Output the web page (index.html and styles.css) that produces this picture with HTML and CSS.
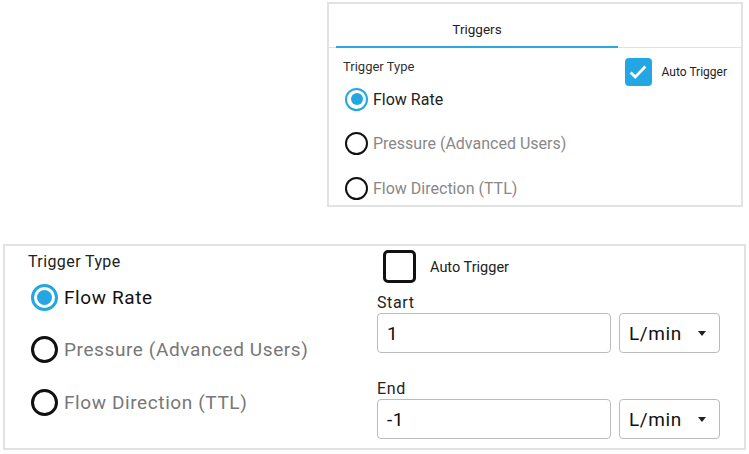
FILE: index.html
```html
<!DOCTYPE html>
<html>
<head>
    <meta charset="utf-8">
    <title>Triggers</title>
    <link rel="stylesheet" href="styles.css">
</head>
<body>
    <div class="top-row">
        <div class="panel small">
            <div class="tabs">
                <div class="tab active">Triggers</div>
            </div>
            <div class="small-body">
                <div class="options">
                    <div class="group-label">Trigger Type</div>
                    <label class="option checked"><span class="radio"></span>Flow Rate</label>
                    <label class="option"><span class="radio"></span>Pressure (Advanced Users)</label>
                    <label class="option"><span class="radio"></span>Flow Direction (TTL)</label>
                </div>
                <div class="auto">
                    <span class="check on">
                        <svg viewBox="0 0 24 24" width="22" height="22"><path d="M4 12.5l5 5L20 6" fill="none" stroke="#fff" stroke-width="3"/></svg>
                    </span>
                    <span class="auto-label">Auto Trigger</span>
                </div>
            </div>
        </div>
    </div>

    <div class="panel large">
        <div class="options">
            <div class="group-label">Trigger Type</div>
            <label class="option checked"><span class="radio"></span>Flow Rate</label>
            <label class="option"><span class="radio"></span>Pressure (Advanced Users)</label>
            <label class="option"><span class="radio"></span>Flow Direction (TTL)</label>
        </div>
        <div class="settings">
            <div class="auto">
                <span class="check"></span>
                <span class="auto-label">Auto Trigger</span>
            </div>
            <div class="field-label">Start</div>
            <div class="field">
                <div class="input">1</div>
                <div class="select">L/min<span class="caret"></span></div>
            </div>
            <div class="field-label end">End</div>
            <div class="field">
                <div class="input">-1</div>
                <div class="select">L/min<span class="caret"></span></div>
            </div>
        </div>
    </div>
</body>
</html>
```

FILE: styles.css
```css
body {
    margin: 0;
    background: #fff;
    font-family: Roboto, "Liberation Sans", Arial, sans-serif;
    color: #222;
}

.top-row {
    display: flex;
    justify-content: flex-end;
    padding: 2px 6px 0 0;
}

.panel {
    border: 2px solid #e2e2e2;
    box-sizing: border-box;
}

/* small panel */
.small {
    width: 416px;
    height: 205px;
    overflow: hidden;
}

.tabs {
    display: flex;
    padding-left: 7px;
    border-bottom: 1px solid #e2e2e2;
}

.tab {
    width: 282px;
    height: 26px;
    padding-top: 16px;
    line-height: 18px;
    text-align: center;
    font-size: 13.5px;
    color: #222;
}

.tab.active {
    border-bottom: 2px solid #2aa7e2;
    margin-bottom: -1px;
}

.small-body {
    display: flex;
    justify-content: space-between;
    padding: 11px 14px 0 14px;
}

.small .group-label {
    font-size: 13px;
    color: #333;
    height: 18px;
}

.small .option {
    display: flex;
    align-items: center;
    height: 44.5px;
    font-size: 16px;
    color: #888;
    gap: 5px;
    margin-left: 2px;
}

.small .option.checked {
    color: #222;
}

.radio {
    display: inline-flex;
    align-items: center;
    justify-content: center;
    box-sizing: border-box;
    border-radius: 50%;
    border: 2px solid #111;
    flex-shrink: 0;
}

.small .radio {
    width: 23px;
    height: 23px;
    border-width: 2.5px;
}

.option.checked .radio {
    border-color: #24a6e3;
}

.option.checked .radio::after {
    content: "";
    border-radius: 50%;
    background: #24a6e3;
}

.small .option.checked .radio::after {
    width: 12px;
    height: 12px;
}

.auto {
    display: flex;
    align-items: center;
}

.check {
    display: inline-flex;
    align-items: center;
    justify-content: center;
    box-sizing: border-box;
    border-radius: 4px;
}

.small .auto {
    align-self: flex-start;
    margin-top: -1px;
}

.small .check {
    width: 27px;
    height: 28px;
    margin-right: 10px;
}

.check.on {
    background: #23a7e4;
}

.small .auto-label {
    font-size: 12px;
    color: #222;
}

/* large panel */
.large {
    display: flex;
    margin: 37px 3px 0 3px;
    height: 206px;
    padding: 0 0 0 23px;
}

.large .options {
    width: 349px;
    padding-top: 6px;
}

.large .group-label {
    font-size: 16px;
    letter-spacing: 0.4px;
    height: 20px;
}

.large .option {
    display: flex;
    align-items: center;
    height: 32px;
    margin-top: 9px;
    margin-left: 3px;
    font-size: 19px;
    letter-spacing: 0.6px;
    color: #777;
    gap: 6px;
}

.large .option + .option {
    margin-top: 20.5px;
}

.large .option.checked {
    color: #111;
}

.large .radio {
    width: 27px;
    height: 27px;
    border-width: 3px;
}

.large .option.checked .radio::after {
    width: 15px;
    height: 15px;
}

.settings {
    width: 344px;
    padding-top: 4px;
}

.large .check {
    width: 33px;
    height: 33px;
    border: 3.5px solid #111;
    border-radius: 5px;
    margin: 0 14px 0 6px;
}

.large .auto-label {
    font-size: 14.5px;
    padding-top: 2px;
}

.field-label {
    font-size: 16px;
    letter-spacing: 0.6px;
    margin-top: 10px;
    height: 20px;
}

.field-label.end {
    margin-top: 26px;
}

.field {
    display: flex;
    gap: 8px;
}

.input, .select {
    box-sizing: border-box;
    height: 40px;
    border: 1px solid #bbb;
    border-radius: 4px;
    display: flex;
    align-items: center;
    font-size: 19px;
    letter-spacing: 0.6px;
    color: #111;
}

.input {
    width: 234px;
    padding-left: 9px;
}

.select {
    width: 101px;
    padding-left: 9px;
    justify-content: space-between;
    padding-right: 13px;
}

.caret {
    width: 0;
    height: 0;
    border-left: 4.5px solid transparent;
    border-right: 4.5px solid transparent;
    border-top: 5px solid #222;
}
```
